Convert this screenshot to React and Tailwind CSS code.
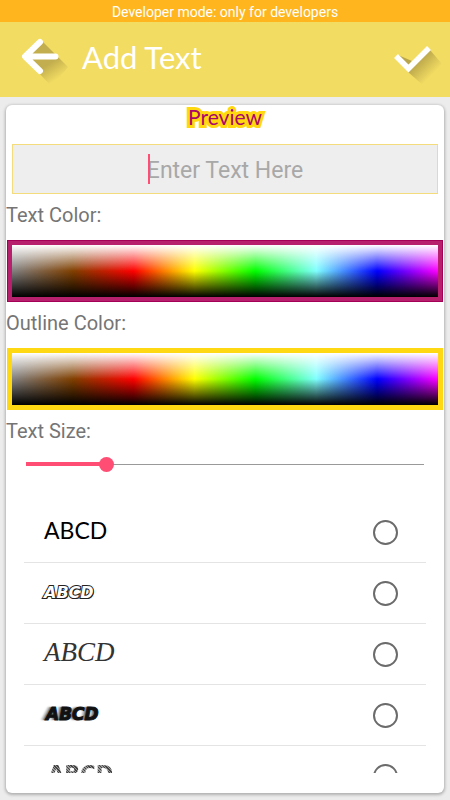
import React, { useState } from 'react';

const FONTS = [
  {
    id: 'round',
    className: "font-['Lato',sans-serif] text-[23px] pb-1 text-black",
  },
  {
    id: 'outline',
    className:
      "font-['DejaVu_Sans',sans-serif] font-bold italic text-base text-white [-webkit-text-stroke:2px_#222] [paint-order:stroke_fill] [text-shadow:1px_1px_0_#222]",
  },
  {
    id: 'script',
    className: "font-['Liberation_Serif',serif] italic text-[27px] pb-1 text-[#333]",
  },
  {
    id: 'speed',
    className:
      "font-['DejaVu_Sans',sans-serif] font-bold italic text-[17px] pl-0.5 text-[#111] [-webkit-text-stroke:1px_#111] [text-shadow:-2px_0_1px_#777,-4px_0_2px_#bbb]",
  },
  {
    id: 'stripes',
    className:
      "font-['DejaVu_Sans',sans-serif] font-bold text-[21px] leading-6 pl-1 pb-1 text-transparent bg-clip-text bg-[repeating-linear-gradient(45deg,#444_0px,#444_1px,#999_1px,#999_2px)]",
  },
];

function BackIcon() {
  return (
    <svg viewBox="0 0 56 60" className="w-14 h-15 overflow-visible" fill="none">
      <defs>
        <linearGradient id="back-shadow" x1="28" y1="26" x2="44" y2="50" gradientUnits="userSpaceOnUse">
          <stop offset="0" stopColor="#c2ae4e" />
          <stop offset="0.4" stopColor="#c2ae4e" />
          <stop offset="1" stopColor="#c2ae4e" stopOpacity="0" />
        </linearGradient>
      </defs>
      <path d="M30 11L45 26H16Z" fill="#c2ae4e" />
      <path d="M16 26H45L56 37L40 57L27 43Z" fill="url(#back-shadow)" />
      <path
        d="M28 12L13 26.500L28 41M14 26.500H43.500"
        stroke="#fff"
        strokeWidth="6"
        strokeLinecap="round"
        strokeLinejoin="round"
      />
    </svg>
  );
}

function CheckIcon() {
  return (
    <svg viewBox="0 0 56 60" className="w-14 h-15 overflow-visible" fill="none">
      <defs>
        <linearGradient id="check-shadow" x1="31" y1="28" x2="46" y2="43" gradientUnits="userSpaceOnUse">
          <stop offset="0" stopColor="#bda94c" />
          <stop offset="0.2" stopColor="#c2ae4e" />
          <stop offset="1" stopColor="#c2ae4e" stopOpacity="0" />
        </linearGradient>
      </defs>
      <path d="M42 20 L54 34 L36 56 L20 42 Z" fill="url(#check-shadow)" />
      <path d="M10 25 L24 31 L20 36 Z" fill="#b9a64a" />
      <path d="M8 26L20.500 38.500L41 18" stroke="#fff" strokeWidth="5.500" />
    </svg>
  );
}

function ColorPicker({ id, label, className }) {
  return (
    <div>
      <div id={id} className="h-[46px] pb-1 flex items-center text-xl text-[#757575]">
        {label}
      </div>
      <div className={`mx-px h-[62px] border-5 ${className}`}>
        <button
          type="button"
          aria-labelledby={id}
          className="block w-full h-full bg-[linear-gradient(to_bottom,#fff,transparent_50%,#000),linear-gradient(to_right,#808080,#804000,#f00,#ff0,#0f0,#80ffff,#00f,#f0f)]"
        />
      </div>
    </div>
  );
}

export default function App() {
  const [text, setText] = useState('');
  const [size, setSize] = useState(19);
  const [font, setFont] = useState('');

  return (
    <div className="h-screen flex flex-col bg-[#ececec] font-['Roboto',sans-serif] overflow-hidden">
      <div className="h-[22px] shrink-0 flex items-center justify-center bg-[#ffb61e] text-sm text-white pt-0.5">
        Developer mode: only for developers
      </div>

      <header className="h-[75px] shrink-0 flex items-center bg-[#f2dc62] pl-3 pr-1.5">
        <button type="button" aria-label="Back">
          <BackIcon />
        </button>
        <h1 className="flex-1 pl-3.5 pb-1 font-['Lato',sans-serif] text-[31px] text-white">Add Text</h1>
        <button type="button" aria-label="Done">
          <CheckIcon />
        </button>
      </header>

      <main className="flex-1 min-h-0 mx-1.5 mt-2 mb-[7px] pb-5 flex flex-col rounded-md bg-white shadow-[0_1px_3px_1px_rgba(0,0,0,0.25)]">
        <div className="h-[39px] shrink-0 text-center font-['Lato',sans-serif] text-[21px] leading-6 text-[#a8086a]">
          <span className="[-webkit-text-stroke:6px_#ffd80f] [paint-order:stroke_fill] [stroke-linejoin:round]">
            {text || 'Preview'}
          </span>
        </div>

        <div className="relative mx-1.5 shrink-0">
          <input
            type="text"
            aria-label="Text"
            placeholder="Enter Text Here"
            value={text}
            onChange={(e) => setText(e.target.value)}
            className="block w-full h-[50px] pt-0.5 border border-[#f4dc7c] bg-[#eee] text-center text-[23px] text-[#444] placeholder:text-[#a8a8a8] caret-[#ff4d74] outline-none"
          />
          {!text && <span className="absolute left-1/2 top-2.5 -ml-[77px] w-0.5 h-[30px] bg-[#ff4d74]" />}
        </div>

        <div className="shrink-0">
          <ColorPicker
            id="text-color"
            label="Text Color:"
            className="border-[#b7206c] outline outline-[#a50058] -outline-offset-1"
          />
          <ColorPicker id="outline-color" label="Outline Color:" className="border-[#ffd814]" />
        </div>

        <div className="shrink-0">
          <label htmlFor="text-size" className="h-[42px] flex items-center text-xl text-[#757575]">
            Text Size:
          </label>
          <div className="relative mx-5 h-6 flex items-center">
            <div className="w-full h-px bg-[#999]" />
            <div className="absolute left-0 h-1 bg-[#ff4d74]" style={{ width: `${size}%` }} />
            <input
              id="text-size"
              type="range"
              min="0"
              max="100"
              value={size}
              onChange={(e) => setSize(Number(e.target.value))}
              className="absolute inset-0 w-full appearance-none bg-transparent [&::-webkit-slider-thumb]:appearance-none [&::-webkit-slider-thumb]:size-[15px] [&::-webkit-slider-thumb]:rounded-full [&::-webkit-slider-thumb]:bg-[#ff4d74]"
            />
          </div>
        </div>

        <ul className="flex-1 min-h-0 mt-[26px] mx-[18px] overflow-y-auto [scrollbar-width:none] divide-y divide-[#e4e4e4]">
          {FONTS.map((item) => (
            <li key={item.id}>
              <label className="h-15 flex items-center justify-between pl-5 pr-7">
                <span className={item.className}>ABCD</span>
                <input
                  type="radio"
                  name="font"
                  value={item.id}
                  checked={font === item.id}
                  onChange={() => setFont(item.id)}
                  className="appearance-none size-[25px] rounded-full border-2 border-[#6b6b6b] checked:border-[#ff4d74] checked:border-8"
                />
              </label>
            </li>
          ))}
        </ul>
      </main>
    </div>
  );
}
